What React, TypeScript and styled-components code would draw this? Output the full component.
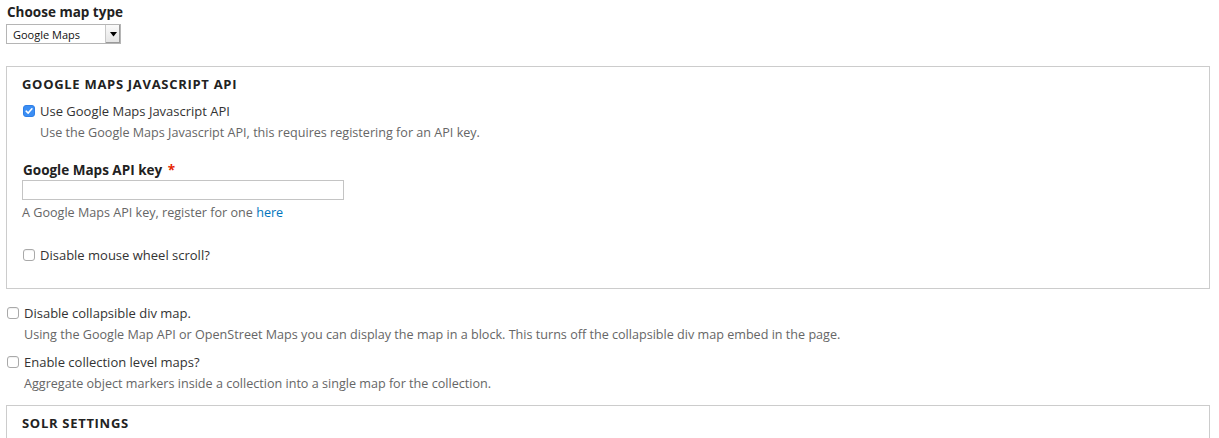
import React from 'react';
import styled, { createGlobalStyle } from 'styled-components';

const Colors = {
  text: '#333',
  heading: '#222',
  muted: '#666',
  border: '#ccc',
  link: '#0074bd',
  required: '#e62600',
  check: '#3b8ef4',
};

const GlobalStyle = createGlobalStyle`
  body {
    margin: 0;
    background: #fff;
    font-family: "Open Sans", "Liberation Sans", sans-serif;
    color: ${Colors.text};
  }
`;

// --------------- Layout

const Page = styled.form`
  display: flex;
  flex-direction: column;
  align-items: flex-start;
  padding: 4px 9px 0 6px;
`;

const FieldLabel = styled.label<{ $mt?: number }>`
  display: block;
  margin-top: ${(p) => p.$mt ?? 0}px;
  font-size: 13.5px;
  line-height: 16px;
  font-weight: 700;
  color: ${Colors.heading};
  padding-left: 1px;
`;

const Required = styled.span`
  color: ${Colors.required};
  margin-left: 2px;
`;

// --------------- Select

const SelectBox = styled.div`
  display: flex;
  align-items: stretch;
  margin-top: 4px;
  width: 115px;
  height: 20px;
  border: 1px solid #b5b5b5;
  box-sizing: border-box;
  background: #fff;
  font-size: 11px;
  color: #111;
`;

const SelectValue = styled.span`
  flex: 1;
  display: flex;
  align-items: center;
  padding-left: 6px;
`;

const SelectArrow = styled.span`
  width: 14px;
  display: flex;
  align-items: center;
  justify-content: center;
  border-left: 1px solid #c8c8c8;
  background: linear-gradient(#fafafa, #e4e4e4);
  box-shadow: inset -1px -1px 0 #9a9a9a;
`;

// --------------- Fieldset

const Fieldset = styled.fieldset<{ $mt: number }>`
  align-self: stretch;
  margin: ${(p) => p.$mt}px 0 0;
  padding: 9px 15px 25px;
  border: 1px solid ${Colors.border};
  min-width: 0;
`;

const Legend = styled.div`
  font-size: 13px;
  line-height: 16px;
  font-weight: 700;
  letter-spacing: 0.7px;
  text-transform: uppercase;
  color: ${Colors.heading};
`;

// --------------- Form items

const CheckRow = styled.label<{ $mt: number }>`
  display: flex;
  align-items: center;
  gap: 5px;
  margin-top: ${(p) => p.$mt}px;
  font-size: 13px;
  line-height: 16px;
  color: ${Colors.text};
  padding-left: 1px;
`;

const CheckBox = styled.span<{ $checked?: boolean }>`
  width: 12px;
  height: 12px;
  box-sizing: border-box;
  border-radius: 3px;
  display: flex;
  align-items: center;
  justify-content: center;
  border: 1px solid ${(p) => (p.$checked ? '#2f7fe6' : '#a9a9a9')};
  background: ${(p) => (p.$checked ? Colors.check : '#fff')};
  box-shadow: ${(p) => (p.$checked ? 'none' : 'inset 0 1px 1px rgba(0,0,0,0.06)')};
`;

const Description = styled.div<{ $mt: number; $indent?: number }>`
  margin-top: ${(p) => p.$mt}px;
  padding-left: ${(p) => p.$indent ?? 0}px;
  font-size: 12.6px;
  line-height: 16px;
  color: ${Colors.muted};
`;

const TextInput = styled.input`
  display: block;
  margin-top: 2px;
  width: 322px;
  height: 20px;
  box-sizing: border-box;
  border: 1px solid #c4c4c4;
  padding: 0 4px;
  outline: none;
`;

const Link = styled.a`
  color: ${Colors.link};
  text-decoration: none;
`;

const Check = ({ checked }: { checked?: boolean }): JSX.Element => (
  <CheckBox $checked={checked}>
    {checked && (
      <svg width="8" height="8" viewBox="0 0 8 8">
        <path d="M1.2 4.2 L3.2 6.1 L6.9 1.8" fill="none" stroke="#fff" strokeWidth="1.6" strokeLinecap="round" strokeLinejoin="round" />
      </svg>
    )}
  </CheckBox>
);

const App = (): JSX.Element => (
  <>
    <GlobalStyle />
    <Page>
      <FieldLabel>Choose map type</FieldLabel>
      <SelectBox>
        <SelectValue>Google Maps</SelectValue>
        <SelectArrow>
          <svg width="7" height="5" viewBox="0 0 7 5">
            <path d="M0 0 H7 L3.5 4.5 Z" fill="#000" />
          </svg>
        </SelectArrow>
      </SelectBox>

      <Fieldset $mt={22}>
        <Legend>Google Maps Javascript API</Legend>
        <CheckRow $mt={11}>
          <Check checked />
          Use Google Maps Javascript API
        </CheckRow>
        <Description $mt={6} $indent={18}>
          Use the Google Maps Javascript API, this requires registering for an API key.
        </Description>

        <FieldLabel $mt={21}>
          Google Maps API key <Required>*</Required>
        </FieldLabel>
        <TextInput type="text" />
        <Description $mt={5}>
          A Google Maps API key, register for one <Link href="#">here</Link>
        </Description>

        <CheckRow $mt={26}>
          <Check />
          Disable mouse wheel scroll?
        </CheckRow>
      </Fieldset>

      <CheckRow $mt={16}>
        <Check />
        Disable collapsible div map.
      </CheckRow>
      <Description $mt={6} $indent={18}>
        Using the Google Map API or OpenStreet Maps you can display the map in a block. This turns off the collapsible div map embed in the page.
      </Description>
      <CheckRow $mt={11}>
        <Check />
        Enable collection level maps?
      </CheckRow>
      <Description $mt={6} $indent={18}>
        Aggregate object markers inside a collection into a single map for the collection.
      </Description>

      <Fieldset $mt={13}>
        <Legend>Solr Settings</Legend>
      </Fieldset>
    </Page>
  </>
);

export default App;
